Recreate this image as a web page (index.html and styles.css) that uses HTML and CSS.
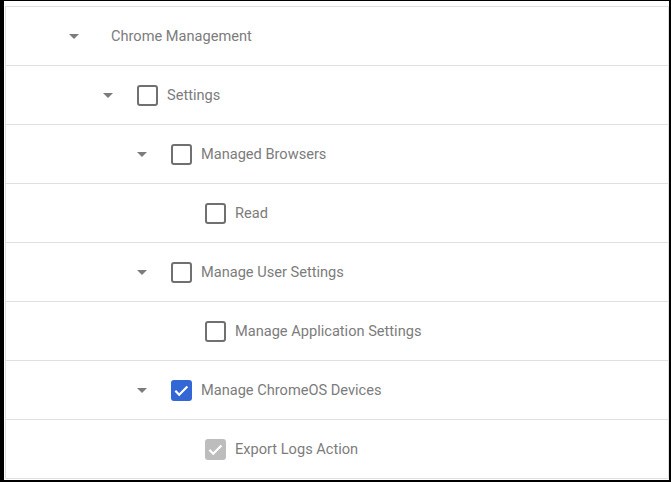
FILE: index.html
```
<!doctype html>
<html lang="en">
  <head>
    <meta charset="UTF-8" />
    <meta name="viewport" content="width=device-width, initial-scale=1.0" />
    <title>Privileges tree</title>
    <link rel="stylesheet" href="styles.css">
  </head>
  <body>
    <div class="Frame">
      <div class="Tree">
        <div class="Node Node--0">
          <span class="Toggle"><svg viewBox="0 0 24 24"><path d="M7 10l5 5 5-5z"/></svg></span>
          <span class="Label Label--plain">Chrome Management</span>
        </div>
        <div class="Node Node--1">
          <span class="Toggle"><svg viewBox="0 0 24 24"><path d="M7 10l5 5 5-5z"/></svg></span>
          <span class="Box"></span>
          <span class="Label">Settings</span>
        </div>
        <div class="Node Node--2">
          <span class="Toggle"><svg viewBox="0 0 24 24"><path d="M7 10l5 5 5-5z"/></svg></span>
          <span class="Box"></span>
          <span class="Label">Managed Browsers</span>
        </div>
        <div class="Node Node--3">
          <span class="Toggle"></span>
          <span class="Box"></span>
          <span class="Label">Read</span>
        </div>
        <div class="Node Node--2">
          <span class="Toggle"><svg viewBox="0 0 24 24"><path d="M7 10l5 5 5-5z"/></svg></span>
          <span class="Box"></span>
          <span class="Label">Manage User Settings</span>
        </div>
        <div class="Node Node--3">
          <span class="Toggle"></span>
          <span class="Box"></span>
          <span class="Label">Manage Application Settings</span>
        </div>
        <div class="Node Node--2">
          <span class="Toggle"><svg viewBox="0 0 24 24"><path d="M7 10l5 5 5-5z"/></svg></span>
          <span class="Box Box--checked"><svg viewBox="0 0 21 21"><path d="M4.3 10.8l3.9 3.9 8.2-8.2"/></svg></span>
          <span class="Label">Manage ChromeOS Devices</span>
        </div>
        <div class="Node Node--3">
          <span class="Toggle"></span>
          <span class="Box Box--disabled"><svg viewBox="0 0 21 21"><path d="M4.3 10.8l3.9 3.9 8.2-8.2"/></svg></span>
          <span class="Label">Export Logs Action</span>
        </div>
      </div>
    </div>
  </body>
</html>
```

FILE: styles.css
```
:root {
  --color-text: #7c7c7c;
  --color-line: #e0e0e0;
  --color-box: #707070;
  --color-accent: #3367d6;
  --color-disabled: #bdbdbd;
}

body {
  margin: 0;
  font-family: Roboto, "Liberation Sans", sans-serif;
  color: var(--color-text);
  background-color: #fff;
}

.Frame {
  width: 671px;
  height: 482px;
  box-sizing: border-box;
  border-style: solid;
  border-color: #000;
  border-width: 1px 2px 2px 4px;
  padding: 5px 0 1px 1px;
}

.Tree {
  border: 1px solid var(--color-line);
  border-bottom: 0;
}

.Node {
  display: flex;
  align-items: center;
  height: 58px;
  border-bottom: 1px solid var(--color-line);
  padding-left: 48px;
  font-size: 14.6px;
}

.Node--1 { padding-left: 82px; }
.Node--2 { padding-left: 116px; }
.Node--3 { padding-left: 150px; }

.Toggle {
  display: flex;
  justify-content: center;
  align-items: center;
  width: 40px;
  height: 40px;
  flex: none;
}

.Toggle svg {
  width: 24px;
  height: 24px;
  fill: var(--color-text);
}

.Box {
  flex: none;
  width: 21px;
  height: 21px;
  margin-left: 9px;
  box-sizing: border-box;
  border: 2px solid var(--color-box);
  border-radius: 3px;
  position: relative;
}

.Box svg {
  position: absolute;
  top: -2px;
  left: -2px;
  width: 21px;
  height: 21px;
  fill: none;
  stroke: #fff;
  stroke-width: 2.2;
}

.Box--checked {
  background-color: var(--color-accent);
  border-color: var(--color-accent);
}

.Box--disabled {
  background-color: var(--color-disabled);
  border-color: var(--color-disabled);
}

.Label {
  margin-left: 9px;
  white-space: nowrap;
}

.Label--plain {
  margin-left: 17px;
}
```
